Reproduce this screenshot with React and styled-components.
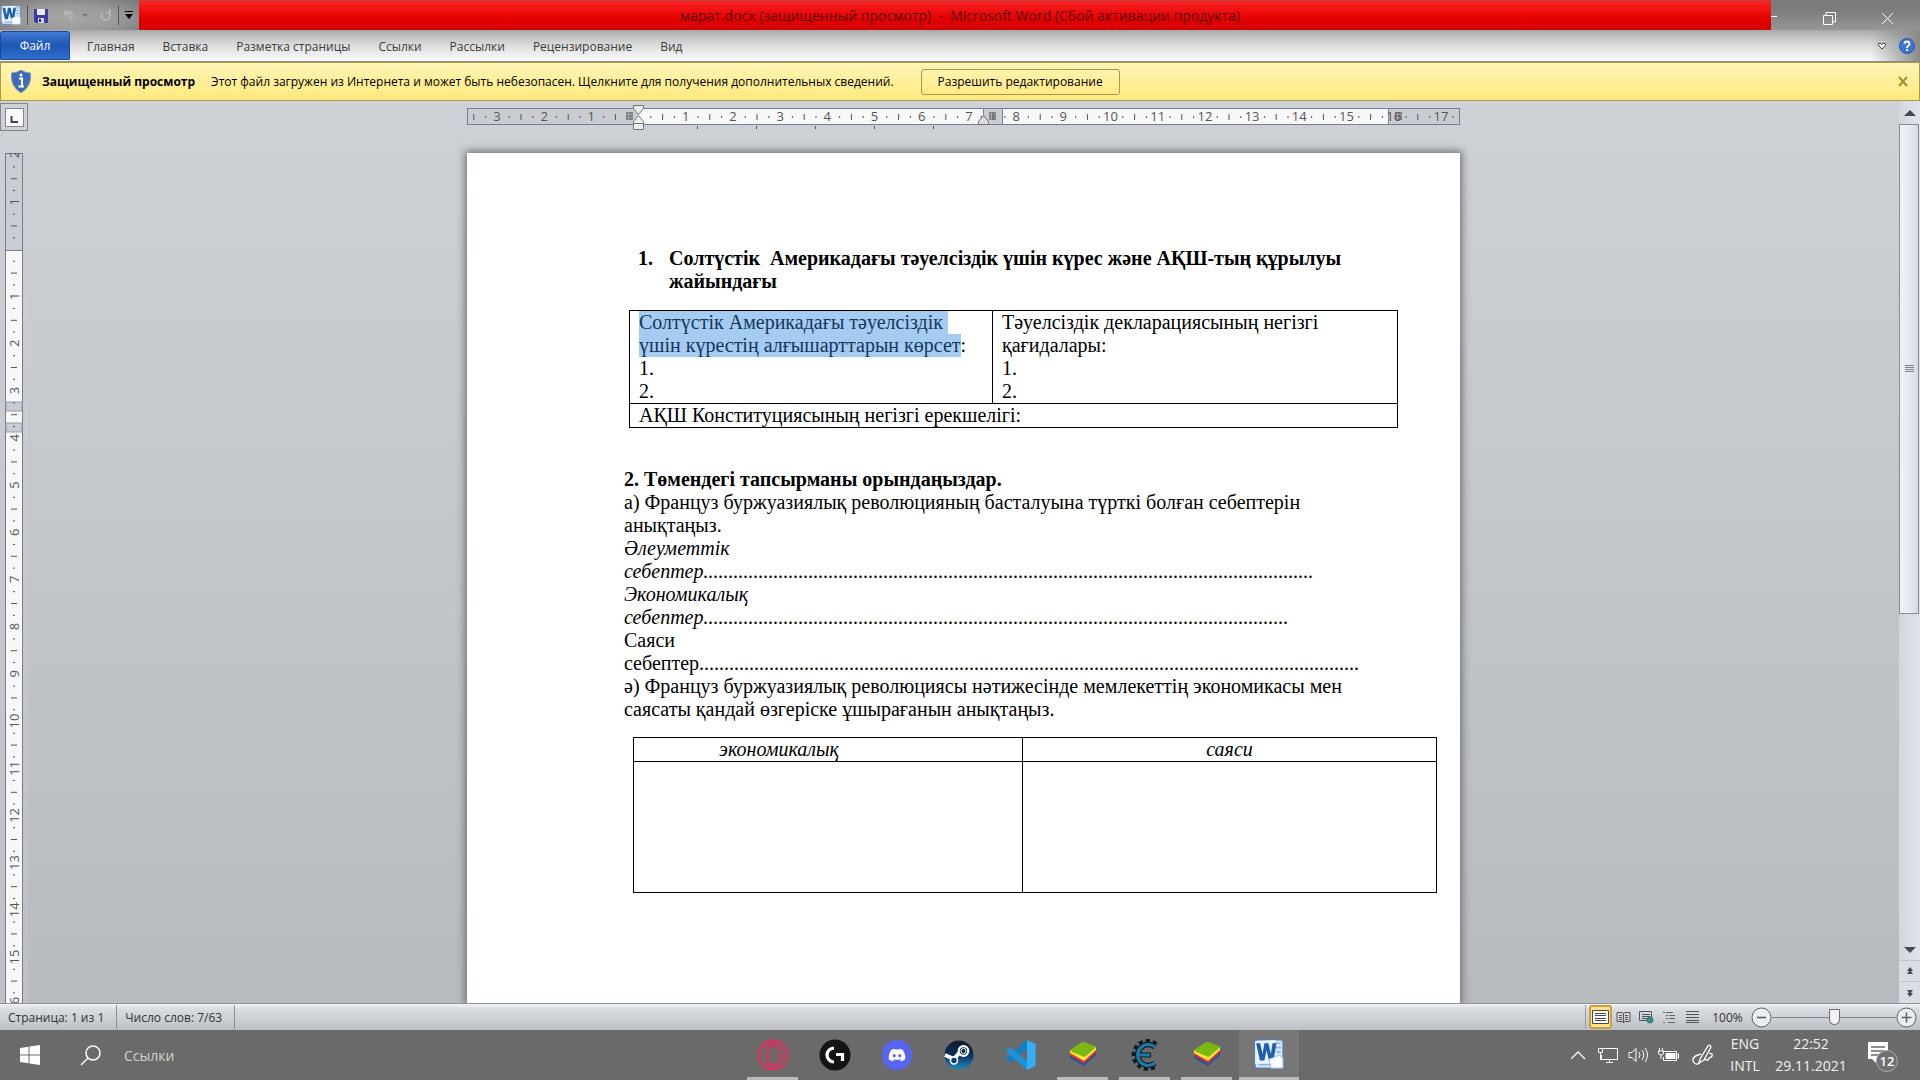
import React from "react";
import styled, { createGlobalStyle, css } from "styled-components";
import { FaDiscord } from "react-icons/fa";

const UI = `"Open Sans", "Noto Sans", sans-serif`;
const DOC = `"Liberation Serif", "Times New Roman", serif`;

const GlobalStyle = createGlobalStyle`
  * { box-sizing: border-box; }
  body { margin: 0; overflow: hidden; font-family: ${UI}; font-size: 12px; color: #222; }
  button { font: inherit; color: inherit; background: none; border: 0; padding: 0; margin: 0; }
  svg { display: block; }
`;

const Desktop = styled.div`
  display: flex;
  flex-direction: column;
  height: 100vh;
`;

/* ---------- title bar ---------- */

const TitleBar = styled.header`
  display: flex;
  height: 30px;
  background: #808080;
`;

const QuickAccess = styled.div`
  display: flex;
  align-items: center;
  gap: 6px;
  width: 139px;
  padding: 0 3px 0 1px;
  background: radial-gradient(ellipse at 50% 60%, #a6a6a6 0%, #9a9a9a 50%, #777 100%);
`;

const QuickDivider = styled.span`
  width: 1px;
  height: 20px;
  background: #555;
`;

const Caption = styled.div`
  flex: 1;
  padding-left: 10px;
  border-top: 1px solid #b44;
  background: linear-gradient(#fa2424, #e60000 60%, #cf0000);
  color: #5c0505;
  font-size: 14px;
  line-height: 30px;
  text-align: center;
  white-space: pre;
`;

const WindowButtons = styled.div`
  display: flex;
  align-items: center;
  justify-content: space-between;
  width: 149px;
  padding: 6px 26px 0 0;
  background: linear-gradient(#7c7c7c 30%, #969696);
`;

/* ---------- ribbon tabs ---------- */

const Ribbon = styled.nav`
  display: flex;
  align-items: stretch;
  height: 32px;
  padding: 1px 5px 0 0;
  border-bottom: 1px solid #8c8a80;
  background: linear-gradient(90deg, transparent calc(100% - 50px), #8a8a8a 100%),
    linear-gradient(#a9a9a9, #d9d9d9 45%, #f6f6f6 90%, #fff);
`;

const FileTab = styled.button`
  width: 70px;
  margin: 0 3px 1px 0;
  border: 1px solid #1c479c;
  border-radius: 3px 3px 0 0;
  background: linear-gradient(#3f7ad6, #1f57b3 50%, #2e6fcd);
  color: #fff;
`;

const Tab = styled.button`
  padding: 0 14px;
  color: #3c3c3c;
`;

const RibbonTools = styled.div`
  display: flex;
  align-items: center;
  gap: 12px;
  margin-left: auto;
`;

/* ---------- protected view message ---------- */

const Message = styled.section`
  display: flex;
  align-items: center;
  height: 39px;
  padding: 0 11px 0 10px;
  border: 1px solid #a89b4f;
  background: linear-gradient(#fff5b8, #ffe97c);
  color: #000;
`;

const MessageTitle = styled.strong`
  margin: 0 16px 0 11px;
`;

const EnableButton = styled.button`
  width: 199px;
  height: 26px;
  margin-left: 27px;
  border: 1px solid #a8984c;
  border-radius: 3px;
`;

const CloseMessage = styled.button`
  margin-left: auto;
`;

/* ---------- work area ---------- */

const WorkArea = styled.main`
  display: flex;
  flex: 1;
  min-height: 0;
  background: linear-gradient(#ced1d5, #b7babe);
`;

const Editor = styled.div`
  display: flex;
  flex-direction: column;
  flex: 1;
  min-width: 0;
`;

const RulerRow = styled.div`
  display: flex;
  height: 52px;
  padding-top: 2px;
`;

const TabSelector = styled.button`
  display: grid;
  place-items: center;
  width: 28px;
  height: 28px;
  border: 1px solid #82868c;
`;

const RulerTrack = styled.div`
  display: flex;
  flex: 1;
  justify-content: center;
`;

const Sheets = styled.div`
  display: flex;
  flex: 1;
  min-height: 0;
`;

const SideRuler = styled.div`
  width: 28px;
  padding-left: 5px;
  overflow: hidden;
  background: #cdd0d855;
`;

const Canvas = styled.div`
  display: flex;
  flex: 1;
  align-items: stretch;
  justify-content: center;
  min-width: 0;
`;

const Page = styled.article`
  width: 993px;
  padding: 94px 0 0 157px;
  background: #fff;
  box-shadow: 0 0 8px 2px #6d7074;
  clip-path: inset(-12px -12px 0 -12px);
  color: #000;
  font-family: ${DOC};
  font-size: 20px;
  line-height: 23px;
  white-space: nowrap;
`;

const ListHeading = styled.h1`
  display: flex;
  margin: 0 0 17px;
  padding-left: 14px;
  font-size: 20px;
  line-height: 23px;
`;

const ListNumber = styled.span`
  width: 31px;
`;

const SubHeading = styled.h2`
  margin: 40px 0 0;
  font-size: 20px;
  line-height: 23px;
`;

const Paragraph = styled.p`
  margin: 0;
  font-style: ${(p) => (p.$italic ? "italic" : "normal")};
`;

const Grid = styled.table`
  width: ${(p) => p.$width}px;
  margin: ${(p) => p.$margin};
  border-collapse: collapse;
  table-layout: fixed;
`;

const Cell = styled.td`
  width: ${(p) => (p.$width ? `${p.$width}px` : "auto")};
  height: ${(p) => (p.$height ? `${p.$height}px` : "auto")};
  padding: 0 9px;
  border: 1px solid #000;
  vertical-align: top;
`;

const HeadCell = styled.th`
  width: ${(p) => (p.$width ? `${p.$width}px` : "auto")};
  padding: 0 ${(p) => p.$indent || 0}px 0 0;
  border: 1px solid #000;
  font-style: italic;
  font-weight: normal;
`;

const Selected = styled.mark`
  display: inline-block;
  padding-right: ${(p) => (p.$trail ? 5 : 0)}px;
  background: #a5cbf0;
  color: #12365e;
`;

/* ---------- scroll bar ---------- */

const ScrollBar = styled.div`
  display: flex;
  flex-direction: column;
  width: 21px;
  background: linear-gradient(90deg, #d3d6de, #dfe3ec);
`;

const ScrollButton = styled.button`
  display: grid;
  place-items: center;
  height: ${(p) => p.$height}px;
  border-top: ${(p) => (p.$line ? "1px solid #c0c4cc" : "0")};
  background: ${(p) => (p.$line ? "#dadde3" : "none")};
`;

const ScrollTrack = styled.div`
  flex: 1;
`;

const Thumb = styled.div`
  display: grid;
  place-items: center;
  width: 20px;
  height: 60%;
  border: 1px solid #858a96;
  background: linear-gradient(90deg, #f0f2f6, #e4e8ee 60%, #d5dae3);
`;

/* ---------- status bar ---------- */

const StatusBar = styled.footer`
  display: flex;
  align-items: center;
  height: 27px;
  padding-right: 3px;
  border-top: 1px solid #8f939b;
  background: linear-gradient(#f2f3f5, #d9dce0 20%, #bdc1c5);
  color: #333;
`;

const StatusItem = styled.button`
  height: 24px;
  padding: 0 12px 0 8px;
  border-right: 1px solid #8d9095;
`;

const Views = styled.div`
  display: flex;
  align-items: center;
  margin-left: auto;
  padding-left: 3px;
  border-left: 1px solid #999ca1;
`;

const ViewButton = styled.button`
  display: grid;
  place-items: center;
  width: 23px;
  height: 24px;
  ${(p) =>
    p.$active &&
    css`
      border: 2px solid #c9a044;
      border-radius: 3px;
      background: #ffe28a;
    `}
`;

const ZoomLabel = styled.button`
  width: 31px;
  margin: 0 8px;
`;

const ZoomSlider = styled.input`
  width: 124px;
  height: 20px;
  margin: 0;
  appearance: none;
  background: linear-gradient(#84888e, #84888e) center / 100% 1px no-repeat;
  &::-webkit-slider-thumb {
    appearance: none;
    width: 11px;
    height: 16px;
    border: 1px solid #6d7177;
    border-radius: 1px 1px 6px 6px;
    background: #f1f2f4;
  }
`;

/* ---------- taskbar ---------- */

const TaskBar = styled.footer`
  display: grid;
  grid-template-columns: 1fr auto 1fr;
  height: 50px;
  background: #6a6a6a;
  color: #f2f2f2;
  font-size: 14px;
`;

const TaskLeft = styled.div`
  display: flex;
`;

const TaskButton = styled.button`
  display: grid;
  place-items: center;
  width: 60px;
`;

const SearchText = styled.button`
  padding-left: 4px;
  color: #d2d2d2;
`;

const Apps = styled.div`
  display: flex;
  gap: 2px;
  padding-left: 121px;
`;

const AppButton = styled.button`
  display: flex;
  flex-direction: column;
  align-items: center;
  width: 60px;
  height: 50px;
  padding-top: 9px;
  background: ${(p) => (p.$active ? "#777" : "none")};
`;

const Running = styled.span`
  width: ${(p) => (p.$active ? 60 : 51)}px;
  height: 3px;
  margin-top: auto;
  background: #c0b9bb;
`;

const Tray = styled.div`
  display: flex;
  align-items: center;
  justify-content: flex-end;
`;

const TrayButton = styled.button`
  display: grid;
  place-items: center;
  width: ${(p) => p.$width || 30}px;
  height: 50px;
  line-height: 22px;
`;

const Notice = styled(TrayButton)`
  margin-right: 9px;
  padding-top: 4px;
`;

/* ---------- drawings ---------- */

const WordLogo = ({ size }) => (
  <svg width={size} height={size} viewBox="0 0 28 28">
    <rect x="1" y="1" width="26" height="26" rx="2" fill="#d9e8fa" stroke="#4b83c9" />
    <path d="M20 4h5M20 8h5M21 12h4M4 24h12" stroke="#8fb4e2" strokeWidth="1.5" />
    <path d="M1 2l19-1v21L1 23z" fill="#e8f2fd" />
    <path d="M2 4l3.500 16h4.200l2-9.500 2.300 9.500h4.200L21 4h-3.700l-1.600 10L13.500 4h-3.800L8 14 5.800 4z" fill="#1b5fae" />
    <path d="M14 19l10-4 3 3v9H16z" fill="#fff" stroke="#a9c4e6" />
  </svg>
);

const Stacks = () => (
  <svg width="30" height="30" viewBox="0 0 30 30">
    <path d="M2 19l14 8 12-11v-3L2 16z" fill="#24529b" />
    <path d="M2 16.500l14 8 12-11v-3L2 13z" fill="#d93232" />
    <path d="M2 14l14 8 12-11V8L2 11z" fill="#ffe63b" />
    <path d="M3 10.500L13 3.500q1.500-1 3-.4l11 4q1.500 1 .3 2L18 17q-1.500 1.300-3 .6L3 12.500q-1-1 0-2z" fill="#7cb813" />
  </svg>
);

const Opera = () => (
  <svg width="32" height="32" viewBox="0 0 32 32" fill="none" stroke="#e02e5a">
    <circle cx="16" cy="16" r="14.500" strokeWidth="1.800" />
    <circle cx="15.500" cy="16" r="12.500" strokeWidth=".8" />
    <ellipse cx="16" cy="16" rx="6.500" ry="10.500" strokeWidth="1.600" />
    <path d="M9 8l4-3h7l5 5v12l-5 5h-7l-4-3 4 1V7z" strokeWidth=".9" />
  </svg>
);

const LogiG = () => (
  <svg width="32" height="32" viewBox="0 0 32 32">
    <circle cx="16" cy="16" r="15.500" fill="#141414" />
    <path d="M15 9a7 7 0 0 0 0 14M17 15.500h6.500V22" fill="none" stroke="#fff" strokeWidth="3.200" />
  </svg>
);

const Discord = () => (
  <svg width="32" height="32" viewBox="0 0 32 32">
    <circle cx="16" cy="16" r="14" fill="#5865f2" stroke="#5865f2" strokeWidth="3" strokeDasharray="4 1.500" />
    <FaDiscord x="7" y="7" size={18} color="#fff" />
  </svg>
);

const Steam = () => (
  <svg width="30" height="32" viewBox="0 0 30 32">
    <defs>
      <linearGradient id="steam" x1="0" y1="0" x2="0" y2="1">
        <stop offset="0" stopColor="#111d2e" />
        <stop offset=".5" stopColor="#0a2f5c" />
        <stop offset="1" stopColor="#1f8cc0" />
      </linearGradient>
    </defs>
    <circle cx="15" cy="16" r="14.500" fill="url(#steam)" />
    <path d="M1 16l9 4 6-7" fill="none" stroke="#fff" strokeWidth="4" />
    <circle cx="10" cy="21.500" r="3.500" fill="#0d3d6c" stroke="#fff" strokeWidth="1.600" />
    <circle cx="19.500" cy="12" r="4.800" fill="#0a2644" stroke="#fff" strokeWidth="2.200" />
    <circle cx="19.500" cy="12" r="2.600" fill="none" stroke="#fff" />
  </svg>
);

const Code = () => (
  <svg width="32" height="32" viewBox="0 0 32 32">
    <path d="M22 1v9L5 23.500l-3.500-2.800V19z" fill="#0f7fc8" />
    <path d="M22 31v-9L5 8.500 1.500 11.300V13z" fill="#1b94dc" />
    <path d="M22 1l8.500 4v22L22 31z" fill="#35aef3" />
  </svg>
);

const Engine = () => (
  <svg width="32" height="32" viewBox="0 0 32 32" fill="none">
    <path d="M26 6.500A12 12 0 1 0 26 25.500" stroke="#101c24" strokeWidth="8" strokeDasharray="3.500 2.500" />
    <path d="M26 8A10.500 10.500 0 1 0 26 24" stroke="#101c24" strokeWidth="5.500" />
    <path d="M8 16h14" stroke="#101c24" strokeWidth="5" />
    <path d="M26 8A10.500 10.500 0 1 0 26 24M8 16h13" stroke="#1c7ba6" strokeWidth="3.200" />
  </svg>
);

const Grips = ({ x, y }) => (
  <path
    d={`M${x - 3} ${y - 3}h7M${x - 3} ${y}h7M${x - 3} ${y + 3}h7M${x - 2} ${y - 4}v8M${x + 1} ${y - 4}v8M${x + 3} ${y - 4}v8`}
    stroke="#666"
    strokeWidth="1"
  />
);

const CM = 47.2;

const range = (from, to) => Array.from({ length: to - from }, (_, i) => from + i);

const TopRuler = () => {
  const zero = 171.5;
  return (
    <svg width="993" height="32" viewBox="0 0 993 32" fontFamily={UI} fontSize="13">
      <rect x=".5" y="5.500" width="992" height="16" fill="#c9ccd2" stroke="#777b94" />
      <rect x="171" y="6" width="345" height="15" fill="#f8f8f9" />
      <rect x="535" y="6" width="386" height="15" fill="#f8f8f9" />
      <path d="M516.500 5v17M535.500 5v17M921.500 5v17" stroke="#80849a" />
      {range(-4, 18).map((n) => {
        const at = zero + n * CM;
        return (
          <g key={n} fill="#555">
            {n !== 0 && at > 0 && (
              <text x={at} y="18" textAnchor="middle">{Math.abs(n)}</text>
            )}
            {at + CM / 4 > 0 && at + CM / 4 < 990 && <rect x={at + CM / 4} y="13" width="1" height="2" />}
            {at + CM / 2 > 0 && at + CM / 2 < 990 && <rect x={at + CM / 2} y="11" width="1" height="6" />}
            {at + CM * 0.75 > 0 && at + CM * 0.75 < 990 && <rect x={at + CM * 0.75} y="13" width="1" height="2" />}
          </g>
        );
      })}
      <Grips x={162} y={13} />
      <Grips x={525} y={13} />
      <Grips x={931} y={13} />
      <path d="M166.500 2.500h10v3l-5 6-5-6zM171.500 12.500l5 6v2h-10v-2zM166.500 20.500h10v6h-10z" fill="#eee" stroke="#70747c" />
      <path d="M516.500 12.500l5 6v3h-10v-3z" fill="#ddd" stroke="#70747c" />
      <path d="M230.500 23v3M289.500 23v3M348.500 23v3M407.500 23v3M466.500 23v3" stroke="#555" />
    </svg>
  );
};

const LeftRuler = () => {
  const zero = 96;
  return (
    <svg width="18" height="900" viewBox="0 0 18 900" fontFamily={UI} fontSize="13">
      <rect x=".5" y=".5" width="17" height="900" fill="#f8f8f9" stroke="#777b8c" />
      <rect x="1" y="1" width="16" height="96" fill="#c9ccd2" />
      <path d="M1 97.500h16" stroke="#777b8c" />
      <rect x="1" y="249" width="16" height="9" fill="#c9ccd2" stroke="#999ca6" />
      <rect x="1" y="270" width="16" height="9" fill="#c9ccd2" stroke="#999ca6" />
      {range(-2, 17).map((n) => {
        const at = zero + n * CM;
        return (
          <g key={n} fill="#555">
            {n !== 0 && (
              <text transform={`translate(14 ${at}) rotate(-90)`} textAnchor="middle">{Math.abs(n)}</text>
            )}
            <rect x="8" y={at + CM / 4} width="2" height="1" />
            <rect x="6" y={at + CM / 2} width="6" height="1" />
            <rect x="8" y={at + CM * 0.75} width="2" height="1" />
          </g>
        );
      })}
    </svg>
  );
};

const Arrow = ({ d, h = 6 }) => (
  <svg width="12" height={h} viewBox={`0 0 12 ${h}`} fill="#444a52">
    <path d={d} />
  </svg>
);

const tabs = ["Главная", "Вставка", "Разметка страницы", "Ссылки", "Рассылки", "Рецензирование", "Вид"];

const apps = [
  { name: "Opera GX", icon: <Opera />, running: true },
  { name: "Logitech G HUB", icon: <LogiG /> },
  { name: "Discord", icon: <Discord /> },
  { name: "Steam", icon: <Steam /> },
  { name: "Visual Studio Code", icon: <Code /> },
  { name: "BlueStacks", icon: <Stacks />, running: true },
  { name: "Cheat Engine", icon: <Engine />, running: true },
  { name: "BlueStacks 2", icon: <Stacks />, running: true },
  { name: "Microsoft Word", icon: <WordLogo size={30} />, running: true, active: true },
];

const viewIcons = [
  ["Разметка страницы", <svg width="17" height="14" viewBox="0 0 17 14" fill="none" stroke="#4c4a40"><path d="M.5.5h16v13H.5z" fill="#fff" /><path d="M3 3.500h11M3 5.500h11M3 8.500h11M3 10.500h11" /></svg>],
  ["Режим чтения", <svg width="15" height="14" viewBox="0 0 15 14" fill="none" stroke="#555"><path d="M1 2.500h5l1.500 1 1.500-1h5v9H9l-1.500 1-1.500-1H1zM7.500 3v10M3 5.500h3M3 7.500h3M3 9.500h3M9 5.500h3M9 7.500h3M9 9.500h3" /></svg>],
  ["Веб-документ", <svg width="15" height="14" viewBox="0 0 15 14" fill="none" stroke="#555"><path d="M.5 1.500h12v9H.5zM3 4.500h8M3 6.500h8M3 8.500h5" /><circle cx="11" cy="10" r="3" fill="#3b8f8c" stroke="#31706e" /></svg>],
  ["Структура", <svg width="13" height="13" viewBox="0 0 13 13" fill="none" stroke="#666"><path d="M0 1.500h2M3 1.500h7M3 4.500h2M6 4.500h6M3 7.500h2M6 7.500h6M0 11.500h2M5 11.500h7" /></svg>],
  ["Черновик", <svg width="13" height="12" viewBox="0 0 13 12" stroke="#555"><path d="M0 .5h13M0 3.500h13M0 6.500h13M0 9.500h13M0 11.500h13" /></svg>],
];

const ZoomGlyph = ({ plus }) => (
  <svg width="21" height="21" viewBox="0 0 21 21" fill="none" stroke="#5f6368">
    <circle cx="10.500" cy="10.500" r="9.500" fill="#eceef0" />
    <path d={plus ? "M5.500 10.500h10M10.500 5.500v10" : "M6 10.500h9"} strokeWidth="1.600" />
  </svg>
);

export default function App() {
  return (
    <Desktop>
      <GlobalStyle />
      <TitleBar>
        <QuickAccess>
          <WordLogo size={20} />
          <QuickDivider />
          <button aria-label="Сохранить">
            <svg width="14" height="15" viewBox="0 0 14 15">
              <path d="M0 1h14v14H2l-2-2z" fill="#3b3ba5" />
              <path d="M3 1h8v6H3z" fill="#e7eaf8" />
              <path d="M4 10h6v5H4z" fill="#cfd3ee" />
              <path d="M5 11h2v3H5z" fill="#222a70" />
            </svg>
          </button>
          <button aria-label="Отменить">
            <svg width="40" height="14" viewBox="-8 0 40 14" fill="none" stroke="#b4b4b4" strokeWidth="2">
              <path d="M3 2v4h5M3 6q6-5 7 1 0 3-3 5" />
              <path d="M20 6h6l-3 3z" fill="#777" stroke="none" />
            </svg>
          </button>
          <button aria-label="Повторить">
            <svg width="12" height="14" viewBox="0 0 12 14" fill="none" stroke="#b4b4b4" strokeWidth="2">
              <path d="M10 1v4H6M2 5q-2 7 4 7 5-1 4-7" />
            </svg>
          </button>
          <QuickDivider />
          <button aria-label="Настройка панели">
            <svg width="8" height="8" viewBox="0 0 8 8">
              <path d="M0 0h8v1H0zM0 3h8L4 8z" />
            </svg>
          </button>
        </QuickAccess>
        <Caption>марат.docx (защищенный просмотр)  -  Microsoft Word (Сбой активации продукта)</Caption>
        <WindowButtons>
          <button aria-label="Свернуть">
            <svg width="6" height="12" stroke="#fff"><path d="M0 4.500h6" /></svg>
          </button>
          <button aria-label="Восстановить">
            <svg width="13" height="13" viewBox="0 0 13 13" fill="none" stroke="#fff">
              <path d="M.5 3.500h9v9h-9zM3 3V.5h9.500V10H10" />
            </svg>
          </button>
          <button aria-label="Закрыть">
            <svg width="13" height="13" viewBox="0 0 13 13" stroke="#fff"><path d="M1 1l11 11M12 1L1 12" /></svg>
          </button>
        </WindowButtons>
      </TitleBar>

      <Ribbon>
        <FileTab>Файл</FileTab>
        {tabs.map((t) => (
          <Tab key={t}>{t}</Tab>
        ))}
        <RibbonTools>
          <button aria-label="Свернуть ленту">
            <svg width="10" height="8" viewBox="0 0 10 8" fill="#fff" stroke="#444">
              <path d="M1 2l2-1 2 1.500L7 1l2 1-1 2-3 3-3-3z" />
            </svg>
          </button>
          <button aria-label="Справка">
            <svg width="16" height="16" viewBox="0 0 16 16">
              <circle cx="8" cy="8" r="7.500" fill="#3d77d6" stroke="#2656a8" />
              <path d="M5.500 6q0-2.500 2.500-2.500T10.500 6q0 1-1.500 2-1 .6-1 2M8 11v2" fill="none" stroke="#fff" strokeWidth="1.800" />
            </svg>
          </button>
        </RibbonTools>
      </Ribbon>

      <Message>
        <svg width="20" height="23" viewBox="0 0 20 23">
          <path d="M10 0q4 3 9.500 3 1.500 13-9.500 20Q-1 16 .5 3 6 3 10 0z" fill="#3f6bb5" stroke="#7a95c0" />
          <path d="M8 8.500h3v8M7.500 16.500h5.500" stroke="#fff" strokeWidth="2" fill="none" />
          <circle cx="10" cy="5" r="1.500" fill="#fff" />
        </svg>
        <MessageTitle>Защищенный просмотр</MessageTitle>
        <span>Этот файл загружен из Интернета и может быть небезопасен. Щелкните для получения дополнительных сведений.</span>
        <EnableButton>Разрешить редактирование</EnableButton>
        <CloseMessage aria-label="Закрыть сообщение">
          <svg width="10" height="11" viewBox="0 0 10 11" stroke="#a58f2c" strokeWidth="2"><path d="M1 1l8 9M9 1L1 10" /></svg>
        </CloseMessage>
      </Message>

      <WorkArea>
        <Editor>
          <RulerRow>
            <TabSelector aria-label="Табуляция">
              <svg width="19" height="19" viewBox="0 0 19 19">
                <rect x=".5" y=".5" width="18" height="18" fill="#fafafa" stroke="#85888e" />
                <path d="M6.500 8v6H13" fill="none" stroke="#444" strokeWidth="2" />
              </svg>
            </TabSelector>
            <RulerTrack>
              <TopRuler />
            </RulerTrack>
          </RulerRow>
          <Sheets>
            <SideRuler>
              <LeftRuler />
            </SideRuler>
            <Canvas>
              <Page>
                <ListHeading>
                  <ListNumber>1.</ListNumber>
                  <span>
                    Солтүстік &nbsp;Америкадағы тәуелсіздік үшін күрес және АҚШ-тың құрылуы
                    <br />
                    жайындағы
                  </span>
                </ListHeading>
                <Grid $width={769} $margin="0 0 0 5px">
                  <tbody>
                    <tr>
                      <Cell $width={363}>
                        <Selected $trail>Солтүстік Америкадағы тәуелсіздік</Selected>
                        <br />
                        <Selected>үшін күрестің алғышарттарын көрсет</Selected>:
                        <br />
                        1.
                        <br />
                        2.
                      </Cell>
                      <Cell>
                        Тәуелсіздік декларациясының негізгі
                        <br />
                        қағидалары:
                        <br />
                        1.
                        <br />
                        2.
                      </Cell>
                    </tr>
                    <tr>
                      <Cell colSpan={2}>АҚШ Конституциясының негізгі ерекшелігі:</Cell>
                    </tr>
                  </tbody>
                </Grid>
                <SubHeading>2. Төмендегі тапсырманы орындаңыздар.</SubHeading>
                <Paragraph>
                  а) Француз буржуазиялық революцияның басталуына түрткі болған себептерін
                  <br />
                  анықтаңыз.
                </Paragraph>
                <Paragraph $italic>
                  Әлеуметтік
                  <br />
                  себептер{".".repeat(122)}
                </Paragraph>
                <Paragraph $italic>
                  Экономикалық
                  <br />
                  себептер{".".repeat(117)}
                </Paragraph>
                <Paragraph>
                  Саяси
                  <br />
                  себептер{".".repeat(132)}
                </Paragraph>
                <Paragraph>
                  ә) Француз буржуазиялық революциясы нәтижесінде мемлекеттің экономикасы мен
                  <br />
                  саясаты қандай өзгеріске ұшырағанын анықтаңыз.
                </Paragraph>
                <Grid $width={804} $margin="16px 0 0 9px">
                  <thead>
                    <tr>
                      <HeadCell $width={389} $indent={98}>экономикалық</HeadCell>
                      <HeadCell>саяси</HeadCell>
                    </tr>
                  </thead>
                  <tbody>
                    <tr>
                      <Cell $height={131} />
                      <Cell />
                    </tr>
                  </tbody>
                </Grid>
              </Page>
            </Canvas>
          </Sheets>
        </Editor>
        <ScrollBar>
          <ScrollButton $height={23} aria-label="Вверх"><Arrow d="M0 6l6-6 6 6z" /></ScrollButton>
          <ScrollTrack>
            <Thumb>
              <svg width="9" height="8" stroke="#7c818c"><path d="M0 .5h9M0 2.500h9M0 4.500h9M0 6.500h9" /></svg>
            </Thumb>
          </ScrollTrack>
          <ScrollButton $height={20} aria-label="Вниз"><Arrow d="M0 0h12L6 6z" /></ScrollButton>
          <ScrollButton $height={21} $line aria-label="Предыдущая страница"><Arrow h={8} d="M3 4l3-4 3 4zM3 7l3-4 3 4z" /></ScrollButton>
          <ScrollButton $height={22} $line aria-label="Следующая страница"><Arrow h={8} d="M3 1h6L6 5zM3 4h6L6 8z" /></ScrollButton>
        </ScrollBar>
      </WorkArea>

      <StatusBar>
        <StatusItem>Страница: 1 из 1</StatusItem>
        <StatusItem>Число слов: 7/63</StatusItem>
        <Views>
          {viewIcons.map(([name, icon], i) => (
            <ViewButton key={name} aria-label={name} $active={i === 0}>{icon}</ViewButton>
          ))}
        </Views>
        <ZoomLabel>100%</ZoomLabel>
        <button aria-label="Уменьшить"><ZoomGlyph /></button>
        <ZoomSlider type="range" min="0" max="200" defaultValue="100" aria-label="Масштаб" />
        <button aria-label="Увеличить"><ZoomGlyph plus /></button>
      </StatusBar>

      <TaskBar>
        <TaskLeft>
          <TaskButton aria-label="Пуск">
            <svg width="20" height="20" viewBox="0 0 20 20" fill="#fff">
              <path d="M0 3l8.500-1.200v7.700H0zM9.500 1.600L20 0v9.500H9.500zM0 10.500h8.500v7.700L0 17zM9.500 10.500H20V20L9.500 18.400z" />
            </svg>
          </TaskButton>
          <TaskButton aria-label="Поиск">
            <svg width="21" height="21" viewBox="0 0 21 21" fill="none" stroke="#fff" strokeWidth="1.500">
              <circle cx="13" cy="8" r="7" />
              <path d="M8 13L1 20" />
            </svg>
          </TaskButton>
          <SearchText>Ссылки</SearchText>
        </TaskLeft>
        <Apps>
          {apps.map((a) => (
            <AppButton key={a.name} aria-label={a.name} $active={a.active}>
              {a.icon}
              {a.running && <Running $active={a.active} />}
            </AppButton>
          ))}
        </Apps>
        <Tray>
          <TrayButton aria-label="Скрытые значки">
            <svg width="16" height="9" fill="none" stroke="#fff" strokeWidth="1.300"><path d="M1 8l7-7 7 7" /></svg>
          </TrayButton>
          <TrayButton aria-label="Сеть">
            <svg width="20" height="17" viewBox="0 0 20 17" fill="none" stroke="#fff">
              <path d="M5 1.500h14.500v11H3.500V8M8 15.500h7M11.500 13v3M.5 1.500h4v4h-4zM2.500 6v7" />
            </svg>
          </TrayButton>
          <TrayButton aria-label="Громкость">
            <svg width="21" height="18" viewBox="0 0 21 18" fill="none" stroke="#fff">
              <path d="M1 6.500h3l4-4v13l-4-4H1zM11 6q2 3 0 6M14 4q3.500 5 0 10M17 2q5 7 0 14" />
            </svg>
          </TrayButton>
          <TrayButton aria-label="Батарея">
            <svg width="21" height="14" viewBox="0 0 21 14" fill="none" stroke="#fff">
              <path d="M6 3.500h12.500v9H5.500V9M18.500 6h2v4h-2" />
              <path d="M8 5.500h9v5H8z" fill="#fff" />
              <path d="M.5 3v2q0 2 2.500 2t2.500-2V3zM1.500 0v3M4.500 0v3M3 7v4" />
            </svg>
          </TrayButton>
          <TrayButton $width={40} aria-label="Перо">
            <svg width="22" height="22" viewBox="0 0 22 22" fill="none" stroke="#fff" strokeWidth="1.300">
              <path d="M8 15L16 2q2-2 3 1l-7 13-5 3zM9 10q-9 2-8 7 2 5 7 2M13 15q3 3 4-1 4-1 3-4l-3-1" />
            </svg>
          </TrayButton>
          <TrayButton $width={44}>ENG<br />INTL</TrayButton>
          <TrayButton $width={88}>22:52<br />29.11.2021</TrayButton>
          <Notice $width={56} aria-label="Уведомления">
            <svg width="32" height="32" viewBox="0 0 32 32" fontFamily={UI} fontSize="13" fontWeight="600">
              <path d="M1 1h20v17H9v4l-4-4H1z" fill="#fff" />
              <path d="M4 6h14M4 10h14M4 14h8" stroke="#6a6a6a" strokeWidth="1.500" />
              <circle cx="20" cy="20" r="10.500" fill="#707070" stroke="#aaa" />
              <text x="20" y="24.500" fill="#fff" textAnchor="middle">12</text>
            </svg>
          </Notice>
        </Tray>
      </TaskBar>
    </Desktop>
  );
}
